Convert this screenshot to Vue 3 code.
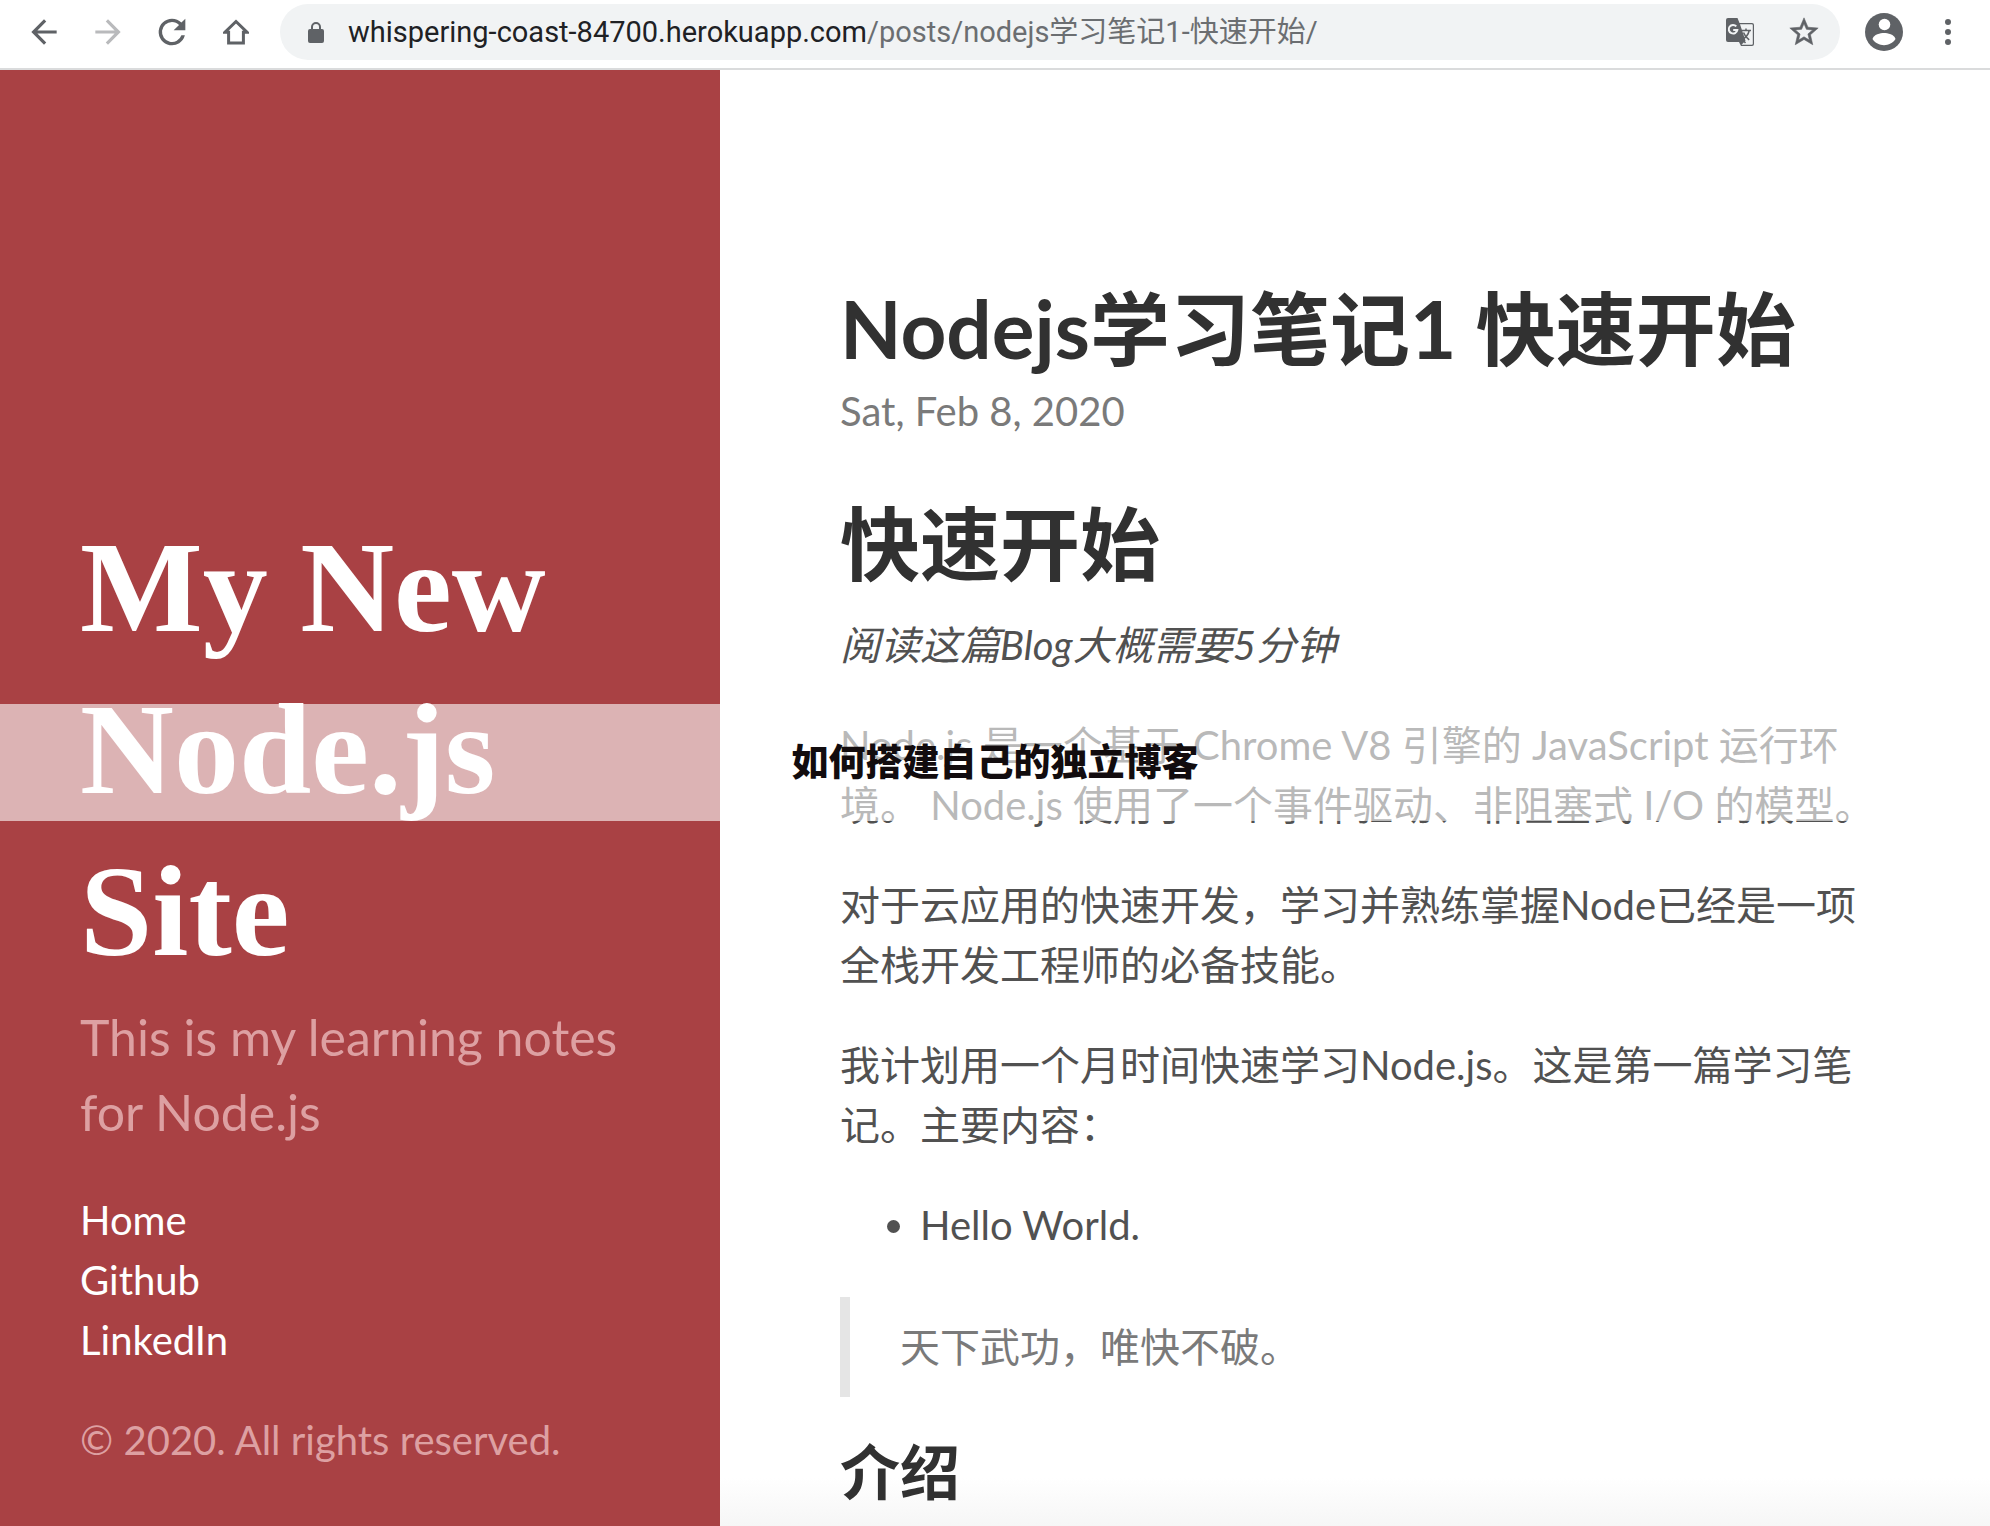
<script setup>
const links = ['Home', 'Github', 'LinkedIn']
</script>

<template>
  <div class="window">
    <header class="toolbar">
      <button class="tool" aria-label="Back">
        <svg viewBox="0 0 24 24" width="38" height="38"><path d="M20 11H7.83l5.59-5.59L12 4l-8 8 8 8 1.41-1.41L7.83 13H20v-2z" /></svg>
      </button>
      <button class="tool muted" aria-label="Forward">
        <svg viewBox="0 0 24 24" width="38" height="38"><path d="M12 4l-1.41 1.41L16.17 11H4v2h12.17l-5.58 5.59L12 20l8-8z" /></svg>
      </button>
      <button class="tool" aria-label="Reload">
        <svg viewBox="0 0 24 24" width="40" height="40"><path d="M17.65 6.35A7.96 7.96 0 0 0 12 4a8 8 0 1 0 7.73 10h-2.08A6 6 0 1 1 12 6c1.66 0 3.14.69 4.22 1.78L13 11h7V4l-2.35 2.35z" /></svg>
      </button>
      <button class="tool" aria-label="Home page">
        <svg viewBox="0 0 26 26" width="26" height="26"><path d="M13 2.5 2 13.2h3.6V24h14.8V13.2H24z" fill="none" stroke="currentColor" stroke-width="3" /></svg>
      </button>
      <div class="address">
        <svg class="lock" viewBox="0 0 16 21" width="16" height="21"><path d="M14 7h-1V5A5 5 0 0 0 3 5v2H2a2 2 0 0 0-2 2v10a2 2 0 0 0 2 2h12a2 2 0 0 0 2-2V9a2 2 0 0 0-2-2zM5 7V5a3 3 0 0 1 6 0v2z" /></svg>
        <div class="url" role="textbox" aria-label="Address" tabindex="0"><span class="host">whispering-coast-84700.herokuapp.com</span>/posts/nodejs学习笔记1-快速开始/</div>
        <button class="tool" aria-label="Translate this page">
          <svg viewBox="0 0 28 28" width="28" height="28">
            <path d="M2 0h9.5l2 5H26a2 2 0 0 1 2 2v19a2 2 0 0 1-2 2H15l-2-4H2a2 2 0 0 1-2-2V2a2 2 0 0 1 2-2z" />
            <path d="M14 6.2h11.8a1 1 0 0 1 1 1v18.6a1 1 0 0 1-1 1H15.500l4-4z" fill="#f1f3f4" />
            <path d="M10.300 8.400A4.300 4.300 0 1 0 11.300 12H7.200" fill="none" stroke="#f1f3f4" stroke-width="2" />
            <path d="M15.500 12.500h9.500M20 10.500v2M23.200 12.500c-.8 4-3.200 6.800-6.700 9M17.500 14.500c1 3 3 5.200 5.700 7.300M16.500 21.500l3 3.500" fill="none" stroke="currentColor" stroke-width="1.500" />
          </svg>
        </button>
        <button class="tool" aria-label="Bookmark this page">
          <svg viewBox="0 0 24 24" width="34" height="34"><path stroke="currentColor" stroke-width=".4" d="M22 9.24l-7.19-.62L12 2 9.19 8.63 2 9.24l5.46 4.73L5.82 21 12 17.27 18.180 21l-1.630-7.030L22 9.24zM12 15.400l-3.760 2.270 1-4.280-3.320-2.880 4.380-.38L12 6.100l1.710 4.040 4.380.38-3.320 2.880 1 4.280L12 15.400z" /></svg>
        </button>
      </div>
      <button class="tool" aria-label="Profile">
        <svg viewBox="0 0 38 38" width="38" height="38">
          <circle cx="19" cy="19" r="19" />
          <circle cx="19.500" cy="11.500" r="5.800" fill="#fff" />
          <path d="M7.500 26c1-4.500 8-6 11.500-6s10.500 1.500 11.500 6c-2.600 4-7 6.200-11.500 6.200S10.100 30 7.500 26z" fill="#fff" />
        </svg>
      </button>
      <button class="tool" aria-label="Menu">
        <svg viewBox="0 0 40 40" width="40" height="40"><circle cx="20" cy="10" r="3" /><circle cx="20" cy="20" r="3" /><circle cx="20" cy="30" r="3" /></svg>
      </button>
    </header>

    <div class="page">
      <aside class="sidebar">
        <h1 class="site-title">My New Node.js Site</h1>
        <p class="lead">This is my learning notes for Node.js</p>
        <nav class="nav">
          <a v-for="link in links" :key="link" href="#">{{ link }}</a>
        </nav>
        <p class="copyright">© 2020. All rights reserved.</p>
      </aside>

      <main class="content">
        <article class="post">
          <h1>Nodejs学习笔记1 快速开始</h1>
          <time class="date" datetime="2020-02-08">Sat, Feb 8, 2020</time>
          <h1>快速开始</h1>
          <p><em>阅读这篇Blog大概需要5分钟</em></p>
          <p>Node.js 是一个基于 Chrome V8 引擎的 JavaScript 运行环境。 Node.js 使用了一个事件驱动、非阻塞式 I/O 的模型。</p>
          <p>对于云应用的快速开发，学习并熟练掌握Node已经是一项全栈开发工程师的必备技能。</p>
          <p>我计划用一个月时间快速学习Node.js。这是第一篇学习笔记。主要内容：</p>
          <ul>
            <li>Hello World.</li>
          </ul>
          <blockquote>天下武功，唯快不破。</blockquote>
          <h2>介绍</h2>
        </article>
      </main>
    </div>

    <div class="banner">如何搭建自己的独立博客</div>
  </div>
</template>

<style>
body {
  margin: 0;
}
</style>

<style scoped>
.window {
  position: relative;
  display: flex;
  flex-direction: column;
  min-height: 100vh;
  background: #fff;
  color: #515151;
  font: 40px/60px Lato, "Noto Sans CJK SC", sans-serif;
}

h1,
h2,
p,
ul,
blockquote {
  margin: 0;
}

.toolbar {
  display: flex;
  align-items: center;
  gap: 24px;
  padding: 4px 22px 8px 24px;
  border-bottom: 2px solid #dadbdc;
}

.tool {
  display: flex;
  align-items: center;
  justify-content: center;
  flex: none;
  width: 40px;
  height: 40px;
  padding: 0;
  border: 0;
  background: none;
  color: #5f6266;
}

.tool svg,
.lock {
  flex: none;
  fill: currentColor;
}

.muted {
  color: #b9babc;
}

.address {
  display: flex;
  align-items: center;
  flex: 1;
  min-width: 0;
  height: 56px;
  gap: 24px;
  padding: 0 16px 0 28px;
  border-radius: 28px;
  background: #f1f3f4;
  color: #5f6266;
}

.url {
  flex: 1;
  min-width: 0;
  overflow: hidden;
  color: #6b6e71;
  font: 29px/40px Roboto, "Noto Sans CJK SC", sans-serif;
  white-space: nowrap;
}

.host {
  color: #202124;
}

.page {
  display: flex;
  flex: 1;
}

.sidebar {
  box-sizing: border-box;
  display: flex;
  flex-direction: column;
  justify-content: flex-end;
  flex: none;
  width: 720px;
  padding: 80px 80px 56px;
  background: #a94144;
  color: #dda0a2;
}

.site-title {
  margin-bottom: 8px;
  color: #fff;
  font: bold 130px/162px "Liberation Serif", serif;
}

.lead {
  margin-bottom: 40px;
  font-size: 50px;
  line-height: 75px;
}

.nav {
  display: flex;
  flex-direction: column;
  align-items: flex-start;
  margin-bottom: 40px;
}

.nav a {
  color: #fff;
  text-decoration: none;
}

.content {
  flex: 1;
  min-width: 0;
  padding: 208px 110px 16px 120px;
  background: linear-gradient(to top, #f6f6f6, #fff 48px);
}

.post {
  max-width: 1440px;
}

.post h1,
.post h2 {
  color: #313131;
}

.post h1 {
  font-size: 80px;
  line-height: 100px;
}

.date {
  display: block;
  margin: 3px 0 52px;
  color: #7a7a7a;
}

.post p {
  margin-bottom: 40px;
}

.date + h1 {
  margin-bottom: 22px;
}

ul {
  margin-bottom: 42px;
  padding-left: 80px;
}

blockquote {
  margin-bottom: 38px;
  padding: 20px 50px;
  border-left: 10px solid #e5e5e5;
  color: #7a7a7a;
}

.post h2 {
  font-size: 60px;
  line-height: 75px;
}

.banner {
  position: absolute;
  top: 704px;
  left: 0;
  right: 0;
  padding-bottom: 5px;
  background: rgba(255, 255, 255, 0.6);
  color: #120c0e;
  font: 900 37px/112px "Noto Sans CJK SC", sans-serif;
  text-align: center;
}
</style>
